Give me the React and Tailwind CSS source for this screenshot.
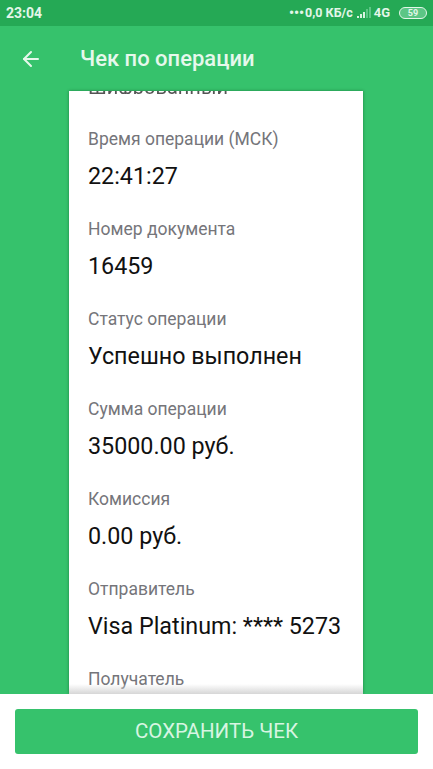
import { ArrowLeft } from 'lucide-react';

const fields = [
  ['Время операции (МСК)', '22:41:27'],
  ['Номер документа', '16459'],
  ['Статус операции', 'Успешно выполнен'],
  ['Сумма операции', '35000.00 руб.'],
  ['Комиссия', '0.00 руб.'],
  ['Отправитель', 'Visa Platinum: **** 5273'],
];

function Signal() {
  return (
    <svg width="16" height="12" viewBox="0 0 16 12" className="ml-[4px]">
      <rect x="0" y="9" width="2" height="2" fill="#d8f3e0" />
      <rect x="3" y="7" width="2" height="4" fill="#d8f3e0" />
      <rect x="6" y="5" width="2" height="6" fill="#d8f3e0" />
      <rect x="9" y="2" width="2" height="9" fill="#5cc685" />
      <rect x="12" y="0" width="2" height="11" fill="#5cc685" />
    </svg>
  );
}

export default function App() {
  return (
    <div className="w-[433px] h-[769px] flex flex-col overflow-hidden bg-white font-['Roboto',sans-serif]">
      {/* status bar */}
      <div className="h-[26px] shrink-0 bg-[#25a955] flex items-center justify-between pl-[6px] pr-[6px] text-[#e3f6e9] font-bold">
        <span className="text-[14px]">23:04</span>
        <div className="flex items-center">
          <span className="mr-[1px] text-[14px] leading-none">•••</span>
          <span className="text-[12.5px]">0,0 КБ/с</span>
          <Signal />
          <span className="ml-[1px] text-[13px]">4G</span>
          <div className="ml-[9px] w-[28px] h-[12px] rounded-full border border-[#e3f6e9] flex items-center justify-center text-[9px] leading-none bg-[#5cc685]">
            59
          </div>
        </div>
      </div>

      {/* green area with the receipt */}
      <div className="h-[668px] shrink-0 bg-[#36c26c] flex flex-col overflow-hidden">
        <div className="h-[65px] shrink-0 flex items-center text-[#e6f8ec]">
          <ArrowLeft size={24} strokeWidth={2} className="ml-[19px]" />
          <h1 className="ml-[37px] text-[22px] font-medium leading-none">Чек по операции</h1>
        </div>
        <div className="relative ml-[69px] w-[294px] flex-1 bg-white shadow-[0_0_3px_rgba(0,60,20,0.45)] overflow-hidden pl-[19px]">
          {/* previous value, scrolled almost out of view */}
          <div className="h-[3px] overflow-hidden">
            <div className="mt-[-14px] text-[20px] leading-[20px] text-[#555] blur-[0.4px] whitespace-nowrap">Шифрованный</div>
          </div>
          <div className="h-[33px]" />
          {fields.map(([label, value]) => (
            <div key={label} className="h-[90px]">
              <div className="text-[17.5px] leading-[24px] text-[#75757a] h-[34px]">{label}</div>
              <div className="text-[23.3px] leading-[30px] text-[#111]">{value}</div>
            </div>
          ))}
          <div className="text-[17.5px] leading-[24px] text-[#75757a]">Получатель</div>
          <div className="absolute left-0 right-0 bottom-0 h-[10px] bg-gradient-to-b from-transparent to-[#d6d6d6]" />
        </div>
      </div>

      {/* save button */}
      <div className="flex-1 px-[15px] pt-[15px]">
        <button className="w-full h-[45px] rounded-[3px] bg-[#36c26c] text-[#d8f5e2] text-[20.5px] flex items-center justify-center">
          СОХРАНИТЬ ЧЕК
        </button>
      </div>
    </div>
  );
}
